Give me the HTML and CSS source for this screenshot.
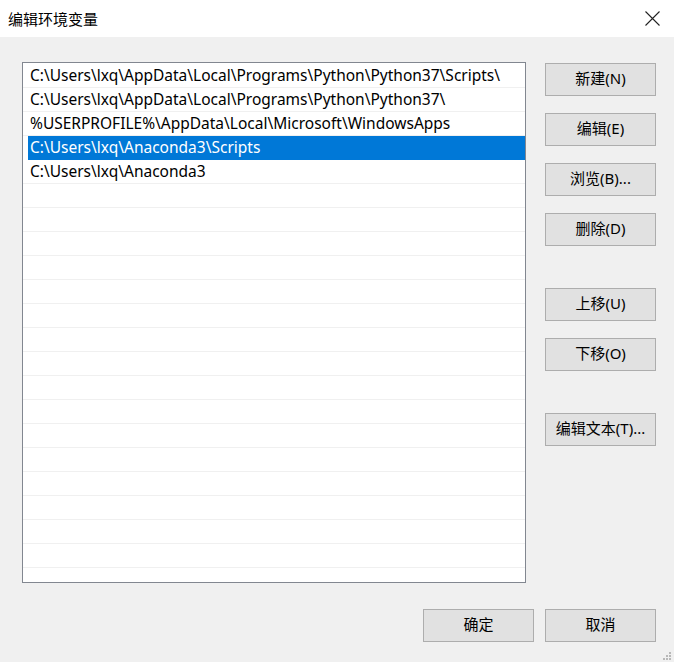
FILE: index.html
```html
<!DOCTYPE html>
<html lang="zh-CN">
<head>
  <meta charset="UTF-8" />
  <title>编辑环境变量</title>
  <link rel="stylesheet" href="styles.css">
</head>
<body>
  <div class="dialog">
    <div class="titlebar">
      <span class="title">编辑环境变量</span>
      <span class="close">
        <svg width="15" height="15" viewBox="0 0 15 15"><path d="M0.5 0.5L14.5 14.5M14.5 0.5L0.5 14.5" stroke="#222" stroke-width="1.1" fill="none"/></svg>
      </span>
    </div>

    <div class="content">
      <div class="list">
        <div class="row">C:\Users\lxq\AppData\Local\Programs\Python\Python37\Scripts\</div>
        <div class="row">C:\Users\lxq\AppData\Local\Programs\Python\Python37\</div>
        <div class="row">%USERPROFILE%\AppData\Local\Microsoft\WindowsApps</div>
        <div class="row selected">C:\Users\lxq\Anaconda3\Scripts</div>
        <div class="row">C:\Users\lxq\Anaconda3</div>
        <div class="row"></div>
        <div class="row"></div>
        <div class="row"></div>
        <div class="row"></div>
        <div class="row"></div>
        <div class="row"></div>
        <div class="row"></div>
        <div class="row"></div>
        <div class="row"></div>
        <div class="row"></div>
        <div class="row"></div>
        <div class="row"></div>
        <div class="row"></div>
        <div class="row"></div>
        <div class="row"></div>
        <div class="row"></div>
      </div>

      <div class="actions">
        <button class="btn">新建(N)</button>
        <button class="btn">编辑(E)</button>
        <button class="btn">浏览(B)...</button>
        <button class="btn">删除(D)</button>
        <button class="btn group">上移(U)</button>
        <button class="btn">下移(O)</button>
        <button class="btn group">编辑文本(T)...</button>
      </div>
    </div>

    <div class="footer">
      <button class="btn">确定</button>
      <button class="btn">取消</button>
    </div>

    <svg class="grip" width="10" height="10" viewBox="0 0 10 10">
      <rect x="7" y="1" width="2" height="2" fill="#b8b8b8"/>
      <rect x="4" y="4" width="2" height="2" fill="#b8b8b8"/>
      <rect x="7" y="4" width="2" height="2" fill="#b8b8b8"/>
      <rect x="1" y="7" width="2" height="2" fill="#b8b8b8"/>
      <rect x="4" y="7" width="2" height="2" fill="#b8b8b8"/>
      <rect x="7" y="7" width="2" height="2" fill="#b8b8b8"/>
    </svg>
  </div>
</body>
</html>
```

FILE: styles.css
```css
body {
  margin: 0;
  font-family: 'Noto Sans', 'Noto Sans CJK SC', sans-serif;
  font-size: 15.5px;
  color: #000;
  background: #f0f0f0;
}

.dialog {
  position: relative;
  width: 674px;
  height: 662px;
  background: #f0f0f0;
  overflow: hidden;
}

.titlebar {
  height: 37px;
  background: #fff;
  display: flex;
  align-items: center;
  justify-content: space-between;
  padding: 0 14px 0 8px;
}

.title {
  font-family: 'Noto Sans CJK SC', sans-serif;
  font-size: 15px;
  margin-top: -1px;
}

.close {
  display: flex;
  margin-top: -1px;
}

.content {
  display: flex;
  gap: 19px;
  padding: 25px 0 0 22px;
}

.list {
  width: 502px;
  height: 518px;
  border: 1px solid #828790;
  background: #fff;
  padding-top: 1px;
  overflow: hidden;
}

.row {
  height: 23px;
  line-height: 23px;
  border-bottom: 1px solid #f0f0f0;
  padding-left: 7px;
  white-space: nowrap;
}

.row.selected {
  background: #0078d7;
  color: #fff;
  margin-left: 5px;
  padding-left: 2px;
  border-bottom-color: #0078d7;
}

.actions {
  display: flex;
  flex-direction: column;
  gap: 17px;
  padding-top: 1px;
}

.btn {
  width: 111px;
  height: 33px;
  background: #e1e1e1;
  border: 1px solid #adadad;
  font-family: 'Noto Sans', 'Noto Sans CJK SC', sans-serif;
  font-size: 15px;
  line-height: 20px;
  color: #000;
  padding: 0 0 3px;
  margin: 0;
}

.actions .group {
  margin-top: 25px;
}

.footer {
  display: flex;
  justify-content: flex-end;
  gap: 11px;
  padding: 26px 18px 0 0;
}

.grip {
  position: absolute;
  right: 2px;
  bottom: 1px;
}
```
